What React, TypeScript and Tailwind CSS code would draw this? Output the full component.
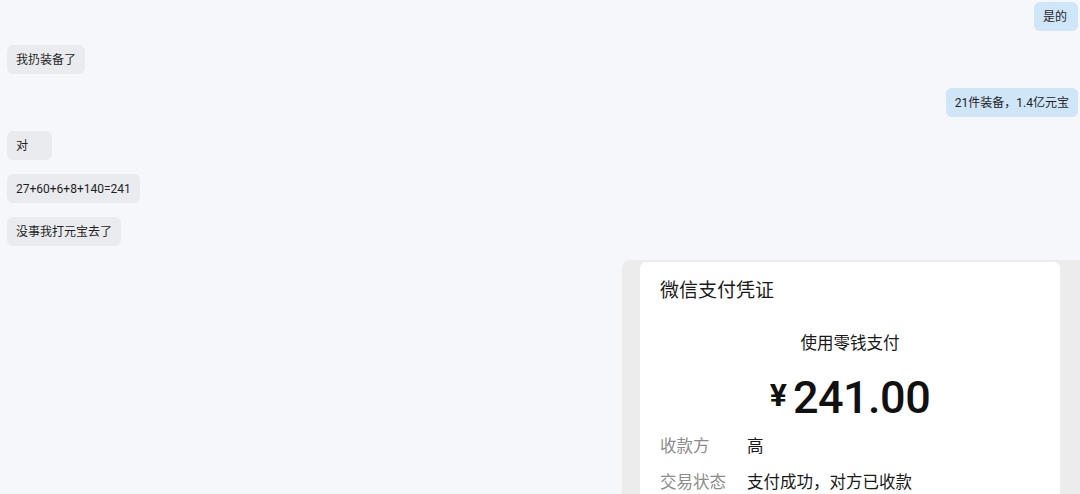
import React from "react";

type Msg = { side: "left" | "right"; text: string };

const messages: Msg[] = [
  { side: "right", text: "是的" },
  { side: "left", text: "我扔装备了" },
  { side: "right", text: "21件装备，1.4亿元宝" },
  { side: "left", text: "对" },
  { side: "left", text: "27+60+6+8+140=241" },
  { side: "left", text: "没事我打元宝去了" },
];

const Bubble: React.FC<{ msg: Msg }> = ({ msg }) => {
  const isRight = msg.side === "right";
  return (
    <div className={isRight ? "flex justify-end pr-[2px]" : "flex justify-start pl-[7px]"}>
      <div
        className={
          isRight
            ? "h-[29px] min-w-[44px] px-[9px] flex items-center rounded-[6px] bg-[#cfe5f8] text-[12px] text-[#1f1f1f]"
            : "h-[29px] min-w-[45px] px-[9px] flex items-center rounded-[6px] bg-[#e9ebee] text-[12px] text-[#1f1f1f]"
        }
      >
        {msg.text}
      </div>
    </div>
  );
};

const Receipt: React.FC = () => {
  return (
    <div className="flex justify-end">
      <div className="w-[458px] h-[236px] rounded-tl-[8px] bg-[#ececec] flex justify-start pl-[18px] pt-[2px] overflow-hidden">
        <div className="w-[420px] h-full bg-white rounded-t-[6px] flex flex-col pl-[20px]">
          <div className="mt-[16px] text-[19px] leading-[26px] text-[#1a1a1a]">微信支付凭证</div>
          <div className="mt-[28px] text-center pr-[20px] text-[16.5px] leading-[24px] text-[#1a1a1a]">
            使用零钱支付
          </div>
          <div className="mt-[16px] h-[52px] flex items-center justify-center pr-[20px] text-[#111] font-['Roboto','Noto_Sans',sans-serif]">
            <span className="text-[32px] leading-[52px] font-bold mr-[6px] -mt-[6px]">¥</span>
            <span className="text-[45px] leading-[52px] font-medium tracking-[-0.5px]">241.00</span>
          </div>
          <div className="mt-[11px] flex items-center text-[16.5px] leading-[24px]">
            <span className="w-[87px] text-[#8c8c8c]">收款方</span>
            <span className="text-[#1a1a1a]">高</span>
          </div>
          <div className="mt-[12px] flex items-center text-[16.5px] leading-[24px]">
            <span className="w-[87px] text-[#8c8c8c]">交易状态</span>
            <span className="text-[#1a1a1a]">支付成功，对方已收款</span>
          </div>
        </div>
      </div>
    </div>
  );
};

const App: React.FC = () => {
  return (
    <div className="w-[1080px] h-[494px] overflow-hidden bg-[#f5f7fa] font-['Roboto','Noto_Sans_CJK_SC',sans-serif]">
      <div className="flex flex-col gap-[14px] pt-[2px]">
        {messages.map((m, i) => (
          <Bubble key={i} msg={m} />
        ))}
        <Receipt />
      </div>
    </div>
  );
};

export default App;
